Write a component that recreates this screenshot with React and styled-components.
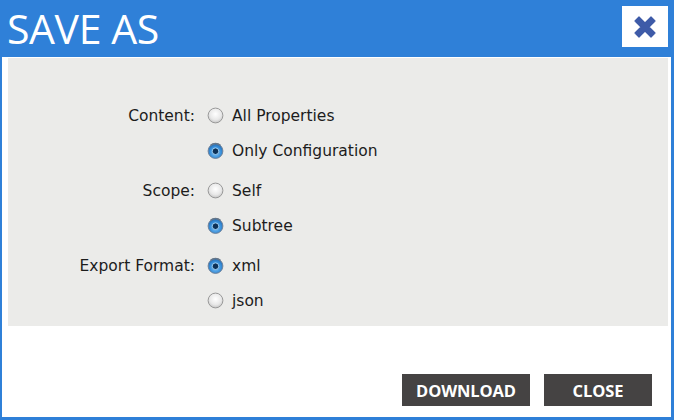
import React, { useState } from 'react';
import styled, { createGlobalStyle } from 'styled-components';

const GlobalStyle = createGlobalStyle`
  html, body {
    margin: 0;
    padding: 0;
    background: #ffffff;
  }
  * {
    box-sizing: border-box;
  }
`;

const Dialog = styled.div`
  width: 674px;
  height: 420px;
  background: #ffffff;
  border-style: solid;
  border-color: #2f80d8;
  border-width: 0 3px 3px 2px;
  display: flex;
  flex-direction: column;
`;

const Header = styled.div`
  height: 57px;
  flex-shrink: 0;
  background: #2f80d8;
  display: flex;
  justify-content: space-between;
  align-items: flex-start;
  padding: 0 3px 0 5px;
`;

const Title = styled.h1`
  margin: 0;
  font-family: "Open Sans", "Liberation Sans", sans-serif;
  font-weight: 400;
  font-size: 41px;
  line-height: normal;
  color: #ffffff;
  letter-spacing: -0.4px;
`;

const CloseBox = styled.button`
  margin-top: 6px;
  width: 46px;
  height: 41px;
  background: #ffffff;
  border: none;
  padding: 0;
  display: flex;
  align-items: center;
  justify-content: center;
  cursor: pointer;
`;

const Panel = styled.div`
  margin: 1px 0 0 6px;
  width: 660px;
  height: 268px;
  background: #ebebe9;
  padding: 40px 0 0 0;
  display: grid;
  grid-template-columns: 187px 1fr;
  column-gap: 12px;
  row-gap: 5px;
  align-content: start;
  font-family: "DejaVu Sans", "Liberation Sans", sans-serif;
  font-size: 15.5px;
  color: #1c1c1c;
`;

const Label = styled.div`
  height: 35px;
  display: flex;
  align-items: center;
  justify-content: flex-end;
`;

const Options = styled.div`
  display: flex;
  flex-direction: column;
`;

const Option = styled.label`
  height: 35px;
  display: flex;
  align-items: center;
  gap: 8px;
  cursor: pointer;
  white-space: nowrap;
`;

const Footer = styled.div`
  flex: 1;
  display: flex;
  justify-content: flex-end;
  align-items: flex-end;
  gap: 14px;
  padding: 0 19px 11px 0;
`;

const Button = styled.button`
  height: 32px;
  width: ${(p) => p.$w}px;
  background: #454343;
  color: #ffffff;
  border: none;
  padding: 0;
  font-family: "Open Sans", "Liberation Sans", sans-serif;
  font-weight: 700;
  font-size: 16.5px;
  letter-spacing: -0.1px;
  cursor: pointer;
`;

const Radio = ({ checked }) => (
  <svg width="17" height="17" viewBox="0 0 17 17">
    <defs>
      <radialGradient id="off" cx="50%" cy="40%" r="60%">
        <stop offset="0%" stopColor="#ffffff" />
        <stop offset="65%" stopColor="#e8e8e8" />
        <stop offset="100%" stopColor="#c4c4c4" />
      </radialGradient>
      <radialGradient id="on" cx="50%" cy="60%" r="60%">
        <stop offset="0%" stopColor="#8cc8f5" />
        <stop offset="60%" stopColor="#3b92dc" />
        <stop offset="100%" stopColor="#1e67b0" />
      </radialGradient>
    </defs>
    {checked ? (
      <>
        <circle cx="8.5" cy="9" r="7.4" fill="url(#on)" stroke="#71839a" strokeWidth="1" />
        <path d="M3.6 3.3 A7.5 7.5 0 0 1 13.4 3.3" stroke="#66778a" strokeWidth="1.6" fill="none" />
        <circle cx="8.5" cy="9.2" r="3.3" fill="#0d3157" stroke="#a4d5f8" strokeWidth="0.9" />
      </>
    ) : (
      <circle cx="8.5" cy="8.5" r="7.4" fill="url(#off)" stroke="#9a9a9a" strokeWidth="1" />
    )}
  </svg>
);

const CloseIcon = () => (
  <svg width="30" height="30" viewBox="0 0 30 30">
    <path
      d="M5 9 L9 5 L15 11 L21 5 L25 9 L19 15 L25 21 L21 25 L15 19 L9 25 L5 21 L11 15 Z"
      fill="#3e5ba8"
      stroke="#3e5ba8"
      strokeWidth="1.2"
      strokeLinejoin="round"
    />
  </svg>
);

const groups = [
  { key: 'content', label: 'Content:', options: ['All Properties', 'Only Configuration'] },
  { key: 'scope', label: 'Scope:', options: ['Self', 'Subtree'] },
  { key: 'format', label: 'Export Format:', options: ['xml', 'json'] },
];

const App = () => {
  const [values, setValues] = useState({
    content: 'Only Configuration',
    scope: 'Subtree',
    format: 'xml',
  });

  return (
    <>
      <GlobalStyle />
      <Dialog>
        <Header>
          <Title>SAVE AS</Title>
          <CloseBox aria-label="Close">
            <CloseIcon />
          </CloseBox>
        </Header>
        <Panel>
          {groups.map((g) => (
            <React.Fragment key={g.key}>
              <Label>{g.label}</Label>
              <Options>
                {g.options.map((o) => (
                  <Option key={o} onClick={() => setValues({ ...values, [g.key]: o })}>
                    <Radio checked={values[g.key] === o} />
                    {o}
                  </Option>
                ))}
              </Options>
            </React.Fragment>
          ))}
        </Panel>
        <Footer>
          <Button $w={128}>DOWNLOAD</Button>
          <Button $w={108}>CLOSE</Button>
        </Footer>
      </Dialog>
    </>
  );
};

export default App;
